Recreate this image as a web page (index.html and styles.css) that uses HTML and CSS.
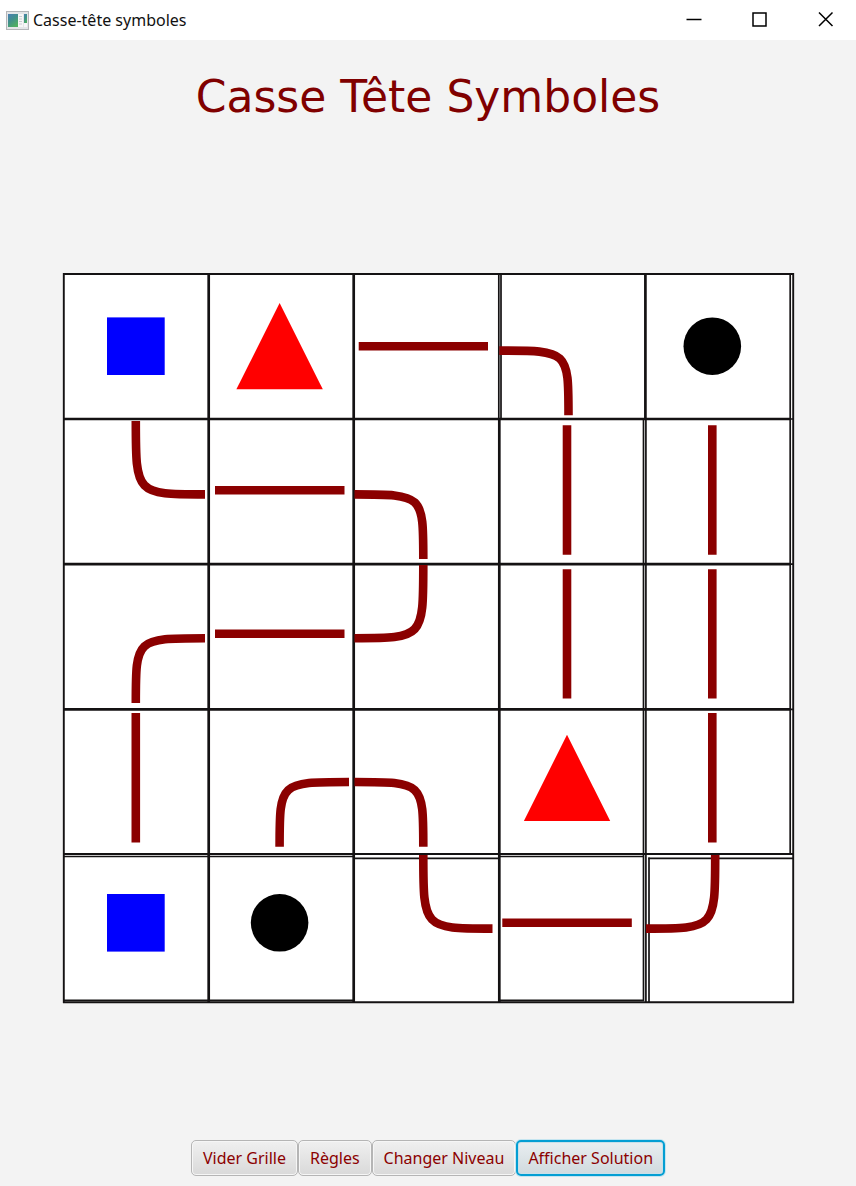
FILE: index.html
```html
<!DOCTYPE html>
<html lang="fr">
<head>
<meta charset="utf-8">
<meta name="viewport" content="width=device-width, initial-scale=1">
<title>Casse-tête symboles</title>
<link rel="stylesheet" href="styles.css">
</head>
<body>
<div class="window">
  <header class="titlebar">
    <svg class="app-icon" viewBox="0 0 23 19" aria-hidden="true">
      <defs><linearGradient id="pane" x1="0" y1="0" x2="0.6" y2="1"><stop offset="0" stop-color="#4a7fb5"/><stop offset="0.5" stop-color="#41908c"/><stop offset="1" stop-color="#4fae62"/></linearGradient></defs>
      <rect x="0.5" y="0.5" width="22" height="18" fill="#e4e6e8" stroke="#b4b6b9"/>
      <rect x="2" y="3" width="10" height="13" fill="url(#pane)"/>
      <rect x="12" y="3" width="5" height="13" fill="#f7f7f7"/>
      <path d="M13 5.5h3M13 8h3M13 10.500h3M13 13h3" stroke="#c9ccd0"/>
      <rect x="18" y="3" width="3" height="9" fill="url(#pane)"/>
      <rect x="18" y="12" width="3" height="4" fill="#f7f7f7"/>
    </svg>
    <span class="caption">Casse-tête symboles</span>
    <div class="controls">
      <button class="control" type="button" aria-label="Réduire"><svg viewBox="0 0 16 16"><path d="M0.500 8.500h15" stroke-width="1.500"/></svg></button>
      <button class="control" type="button" aria-label="Agrandir"><svg viewBox="0 0 16 16"><path d="M1 2h13v13h-13z" stroke-width="1.500"/></svg></button>
      <button class="control" type="button" aria-label="Fermer"><svg viewBox="0 0 16 16"><path d="M1 1.500l13.500 13.500M14.500 1.500L1 15" stroke-width="1.500"/></svg></button>
    </div>
  </header>

  <h1 class="title">Casse Tête Symboles</h1>

  <main class="stage">
    <svg class="board" viewBox="61 271 734 734" role="img" aria-label="Grille de jeu">
      <rect x="63" y="273" width="731" height="730" fill="#fff"/>
      <g class="grid">
        <path class="thick" d="M208.700 273V1003M353.700 273V1003M499.300 419V1003M645.400 273V419"/>
        <path class="thick" d="M63 419H791M63 564.200H791M63 709.400H791"/>
        <path class="medium" d="M63.800 273V1003M63 274H794M63 854H794M63 1002.200H794M793.200 273V1003"/>
        <path class="thin" d="M498.800 273V419M501 273V419M643.500 419V1001M645.900 419V1003M790.200 273V854M649 857.500V1003"/>
        <path class="thin" d="M791 419H794M791 564.200H794M791 709.400H794"/>
        <path class="thin" d="M63 856.500H354M354 858.300H499M500 856.500H644M648.300 858.300H794M63 1000.300H354M500 1000.300H644"/>
      </g>
      <g class="square">
        <rect x="107" y="317.400" width="57.700" height="57.600"/>
        <rect x="107" y="894" width="57.700" height="57.600"/>
      </g>
      <g class="triangle">
        <path d="M279.600 303L322.800 389.300H236.400z"/>
        <path d="M567 734.800L610.200 821H523.900z"/>
      </g>
      <g class="disc">
        <circle cx="712.300" cy="346.200" r="28.800"/>
        <circle cx="279.600" cy="922.800" r="28.800"/>
      </g>
      <g class="trail">
        <path d="M358.700 346.200H488M215 490.200H344.500M215 633.800H344.500M502.300 922.800H631.800"/>
        <path d="M567 425.300V554.700M567 569.200V698.600M712.300 425.300V554.700M712.300 569.200V698.600M712.300 713V842.500M135.800 713V842.500"/>
        <path d="M499.300 350.600C568.500 350.600 568.500 350.600 568.500 415.200"/>
        <path d="M135.800 421C135.800 494.400 135.800 494.400 205 494.400"/>
        <path d="M354.500 494.400C423.300 494.400 423.300 494.400 423.300 559"/>
        <path d="M205 638.200C135.800 638.200 135.800 638.200 135.800 703"/>
        <path d="M354.500 638.200C423.300 638.200 423.300 638.200 423.300 565"/>
        <path d="M349 782C279.600 782 279.600 782 279.600 846.800"/>
        <path d="M354.500 782C423.300 782 423.300 782 423.300 846.800"/>
        <path d="M423.300 855C423.300 928.600 423.300 928.600 492.500 928.600"/>
        <path d="M646 928.600C715.200 928.600 715.200 928.600 715.200 855"/>
      </g>
    </svg>
  </main>

  <footer class="actions">
    <button class="action" type="button">Vider Grille</button>
    <button class="action" type="button">Règles</button>
    <button class="action" type="button">Changer Niveau</button>
    <button class="action action-active" type="button">Afficher Solution</button>
  </footer>
</div>
</body>
</html>
```
FILE: styles.css
```css
* { box-sizing: border-box; }

body {
  margin: 0;
  background: #f3f3f3;
  font-family: "Noto Sans", "Open Sans", sans-serif;
}

.window {
  display: flex;
  flex-direction: column;
  min-height: 100vh;
}

.titlebar {
  display: flex;
  align-items: center;
  height: 40px;
  padding: 0 5px 0 6px;
  background: #fff;
}

.app-icon {
  width: 23px;
  height: 19px;
}

.caption {
  flex: 1;
  margin-left: 4px;
  font-size: 16px;
  color: #111;
}

.controls {
  display: flex;
  align-self: flex-start;
  gap: 16px;
}

.control {
  display: flex;
  align-items: center;
  justify-content: center;
  width: 50px;
  height: 38px;
  padding: 0;
  border: 0;
  background: none;
}

.control svg {
  width: 16px;
  height: 16px;
  fill: none;
  stroke: #000;
}

.title {
  margin: 29px 0 0;
  font: 400 44px/56px "DejaVu Sans", sans-serif;
  color: #800000;
  text-align: center;
}

.stage {
  flex: 1;
  display: flex;
  align-items: center;
  padding: 27px 61px 16px;
}

.board {
  display: block;
  width: 100%;
}

.grid {
  fill: none;
  stroke: #141213;
}

.thick { stroke-width: 2.7px; }
.medium { stroke-width: 1.9px; }
.thin { stroke-width: 1.7px; }

.square { fill: #00f; }
.triangle { fill: #f00; }
.disc { fill: #000; }

.trail {
  fill: none;
  stroke: #8b0000;
  stroke-width: 8.6px;
}

.actions {
  display: flex;
  justify-content: center;
  padding-bottom: 10px;
}

.action {
  height: 36px;
  padding: 0 11px;
  border: 1px solid #b5b5b5;
  border-radius: 5px;
  background: linear-gradient(#f0f0f0, #d9d9d9);
  box-shadow: inset 0 0 0 1px #f6f6f6;
  font: 16px/24px "Noto Sans", "Open Sans", sans-serif;
  color: #8b0000;
}

.action-active {
  padding: 0 10px;
  border: 2px solid #039ed3;
  background: linear-gradient(#e9eef0, #d0dade);
  box-shadow: 0 0 0 1px #c5e5f0, inset 0 0 0 1px #c8e0e9;
}
```
